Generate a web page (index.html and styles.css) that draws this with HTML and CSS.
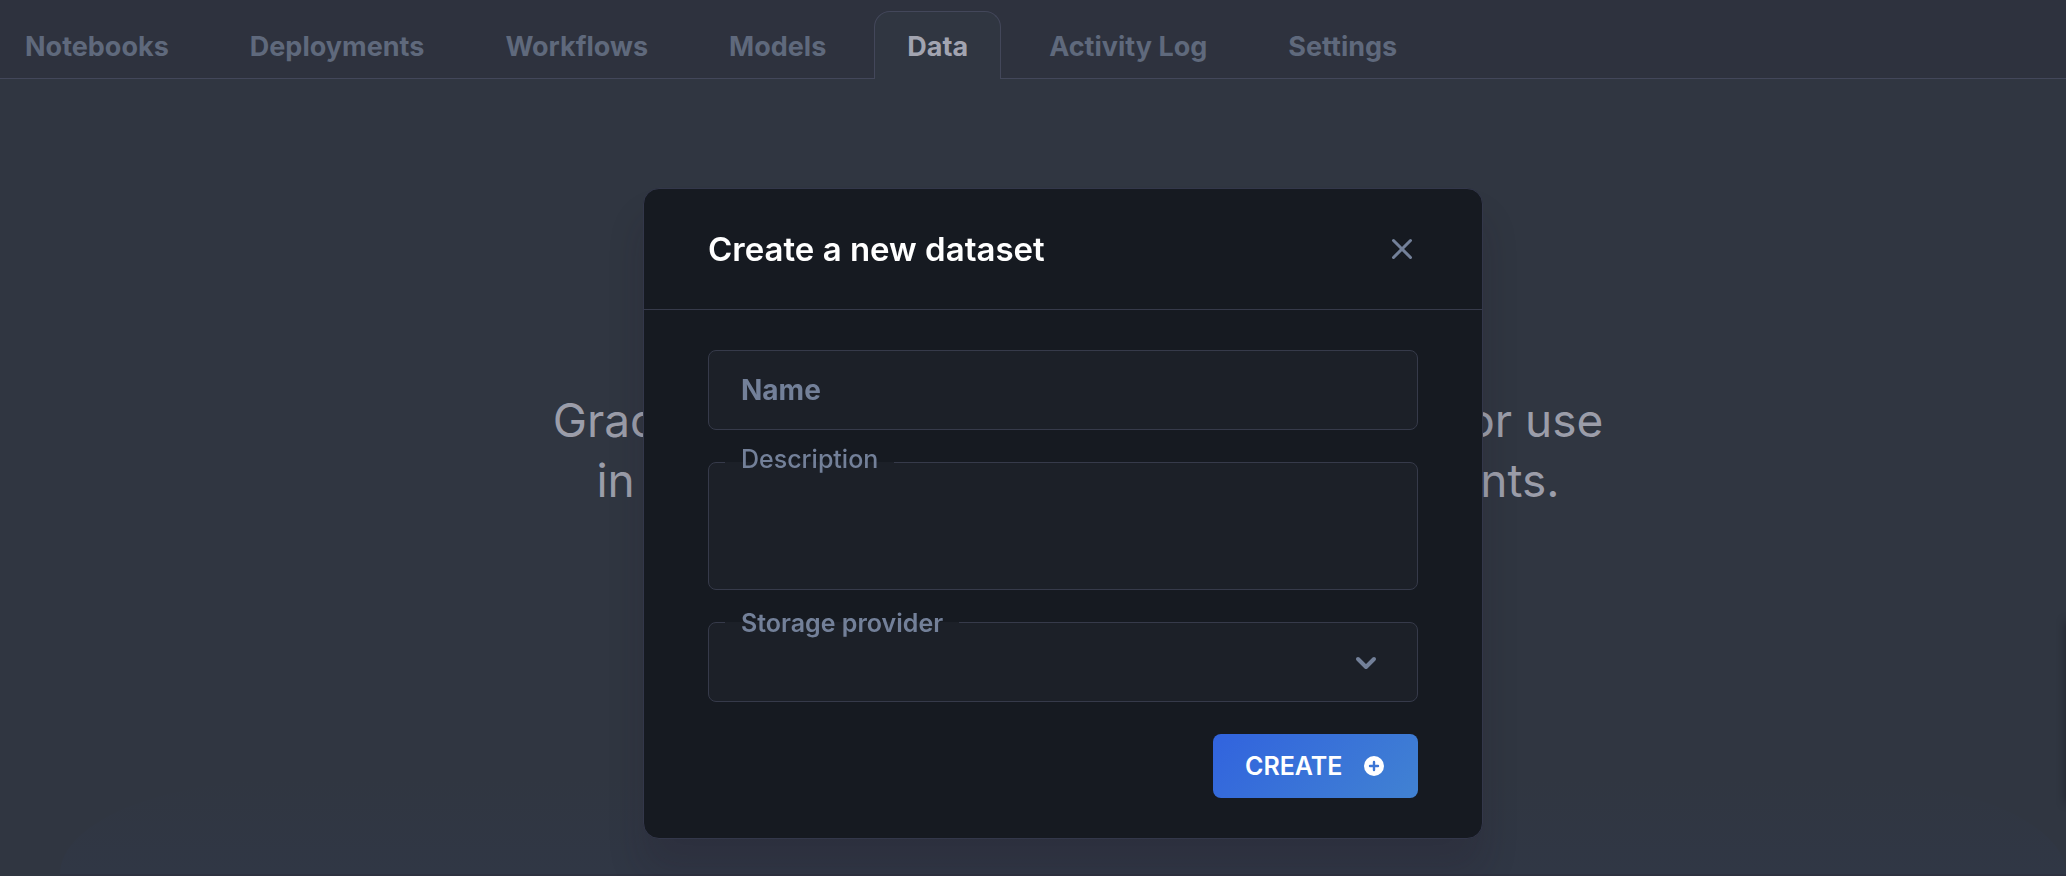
FILE: index.html
```html
<!DOCTYPE html>
<html lang="en">
<head>
<meta charset="utf-8">
<title>Data</title>
<link rel="stylesheet" href="styles.css">
</head>
<body>
<div class="page">
  <nav class="tabs" aria-label="Project">
    <a class="tab" href="#notebooks">Notebooks</a>
    <a class="tab" href="#deployments">Deployments</a>
    <a class="tab" href="#workflows">Workflows</a>
    <a class="tab" href="#models">Models</a>
    <a class="tab tab-active" href="#data" aria-current="page">Data</a>
    <a class="tab" href="#activity">Activity Log</a>
    <a class="tab" href="#settings">Settings</a>
  </nav>
  <main class="content">
    <p class="intro">Gradient Datasets store and version data for use<br>in Notebooks, Workflows, and Deployments.</p>
    <div class="glow"></div>
  </main>
</div>
<div class="side-tab"></div>
<div class="overlay">
  <section class="dialog" role="dialog" aria-labelledby="dialog-title">
    <header class="dialog-header">
      <h1 class="dialog-title" id="dialog-title">Create a new dataset</h1>
      <button class="close" type="button" aria-label="Close">
        <svg width="32" height="32" viewBox="0 0 32 32" fill="none" stroke="currentColor" stroke-width="3" stroke-linecap="round"><path d="M7.500 7.500l17 17M24.500 7.500l-17 17"/></svg>
      </button>
    </header>
    <form class="dialog-body">
      <div class="field">
        <label class="label label-inside" for="name">Name</label>
        <input class="control" id="name" type="text">
      </div>
      <div class="field">
        <label class="label label-notch" for="description">Description</label>
        <textarea class="control control-tall" id="description"></textarea>
      </div>
      <div class="field">
        <label class="label label-notch label-strong" for="provider">Storage provider</label>
        <select class="control" id="provider"><option></option></select>
        <svg class="chevron" width="24" height="24" viewBox="0 0 24 24" fill="none" stroke="currentColor" stroke-width="4" stroke-linecap="round" stroke-linejoin="round"><path d="M4 8l8 8 8-8"/></svg>
      </div>
      <button class="create" type="submit">CREATE
        <svg width="20" height="20" viewBox="0 0 20 20"><circle cx="10" cy="10" r="10" fill="#fff"/><path d="M10 6v8M6 10h8" stroke="#3c76d6" stroke-width="2.400" stroke-linecap="round"/></svg>
      </button>
    </form>
  </section>
</div>
</body>
</html>
```

FILE: styles.css
```css
* {
  box-sizing: border-box;
}

body {
  margin: 0;
  background: #303641;
  font-family: Inter, "Liberation Sans", sans-serif;
}

.page {
  display: flex;
  flex-direction: column;
  min-height: 100vh;
}

.tabs {
  display: flex;
  gap: 15px;
  padding: 11px 8px 0 0;
  border-bottom: 1px solid #43475a;
  background: #2e323e;
}

.tab {
  margin-bottom: -1px;
  padding: 3px 32px 0;
  border: 1px solid transparent;
  border-bottom: 0;
  border-radius: 16px 16px 0 0;
  color: #5f697c;
  font-size: 27px;
  font-weight: 700;
  line-height: 64px;
  text-decoration: none;
  white-space: nowrap;
}

.tab:first-child {
  padding-left: 24px;
}

.tab-active {
  border-color: #43475a;
  background: #303641;
  color: #a2a4b0;
}

.content {
  display: flex;
  flex: 1;
  flex-direction: column;
  justify-content: space-between;
  padding-top: 311px;
}

.intro {
  margin: 0;
  padding-left: 90px;
  color: #9b9da9;
  font-size: 46px;
  font-weight: 400;
  line-height: 60px;
  text-align: center;
}

.glow {
  height: 98px;
  margin: 0 0 0 60px;
  border-bottom: 2px solid #2e3240;
  border-radius: 240px 240px 0 0 / 96px 96px 0 0;
  background: linear-gradient(#303641, #303745);
}

.side-tab {
  position: fixed;
  top: 622px;
  left: 100%;
  width: 24px;
  height: 180px;
  box-shadow: 0 0 8px rgba(20, 18, 30, 0.5);
}

.overlay {
  position: absolute;
  inset: 0;
  display: flex;
  align-items: flex-start;
  justify-content: center;
  padding: 188px 0 0 60px;
}

.dialog {
  width: 840px;
  max-width: 90%;
  border: 1px solid #33374a;
  border-radius: 16px;
  background: #161a21;
  box-shadow: 0 32px 36px rgba(30, 20, 35, 0.16);
}

.dialog-header {
  display: flex;
  align-items: center;
  justify-content: space-between;
  height: 121px;
  padding: 0 64px;
  border-bottom: 1px solid #363a4a;
}

.dialog-title {
  margin: 0;
  color: #fff;
  font-size: 33px;
  font-weight: 600;
  line-height: 40px;
}

.close {
  display: flex;
  padding: 0;
  border: 0;
  background: none;
  color: #738099;
}

.dialog-body {
  display: flex;
  flex-direction: column;
  gap: 32px;
  padding: 40px 64px;
}

.field {
  position: relative;
  display: flex;
}

.control {
  width: 100%;
  height: 80px;
  margin: 0;
  padding: 0 32px;
  border: 1px solid #363a4a;
  border-radius: 8px;
  outline: 0;
  appearance: none;
  background: #1c2028;
  color: #fff;
  font: 500 25px Inter, "Liberation Sans", sans-serif;
  resize: none;
}

.control-tall {
  height: 128px;
  padding: 24px 32px;
}

.label {
  position: absolute;
  left: 17px;
  padding: 0 16px;
  color: #738099;
}

.label-inside {
  top: 0;
  font-size: 28px;
  font-weight: 700;
  line-height: 80px;
}

.label-notch {
  z-index: 0;
  top: -19px;
  font-size: 25px;
  font-weight: 500;
  line-height: 32px;
}

.label-notch::before {
  position: absolute;
  z-index: -1;
  top: 19px;
  left: 0;
  width: 100%;
  height: 1px;
  background: #1c2028;
  content: "";
}

.label-strong {
  top: -15px;
  font-weight: 600;
}

.label-strong::before {
  top: 15px;
}

.chevron {
  position: absolute;
  top: 29px;
  right: 40px;
  color: #738099;
  pointer-events: none;
}

.create {
  display: flex;
  align-items: center;
  align-self: flex-end;
  justify-content: space-between;
  width: 205px;
  height: 64px;
  padding: 0 34px 0 32px;
  border: 0;
  border-radius: 8px;
  background: linear-gradient(135deg, #3163de, #4182d2);
  color: #fff;
  font: 600 25px Inter, "Liberation Sans", sans-serif;
}
```
